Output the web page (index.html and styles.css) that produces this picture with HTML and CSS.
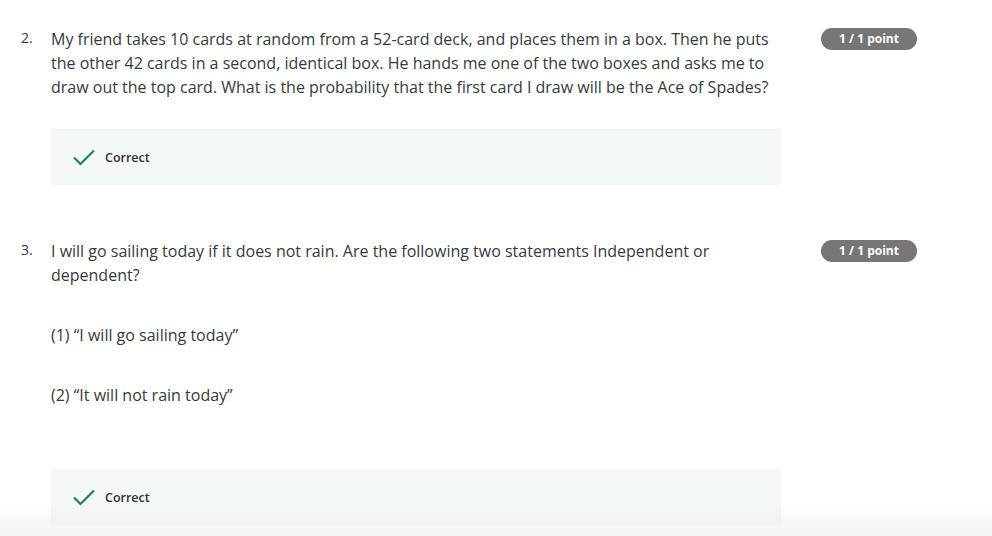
FILE: index.html
```html
<!DOCTYPE html>
<html lang="en">
<head>
<meta charset="utf-8">
<link rel="stylesheet" href="styles.css">
</head>
<body>
<div class="page">
  <div class="question q2">
    <div class="num">2.</div>
    <div class="content">
      <p class="prompt">My friend takes 10 cards at random from a 52-card deck, and places them in a box. Then he puts the other 42 cards in a second, identical box. He hands me one of the two boxes and asks me to draw out the top card. What is the probability that the first card I draw will be the Ace of Spades?</p>
      <div class="feedback">
        <svg class="check" width="24" height="24" viewBox="0 0 24 24"><path d="M2 12.5 L8.5 19 L22 5.5" fill="none" stroke="#1f8354" stroke-width="2.2"/></svg>
        <span>Correct</span>
      </div>
    </div>
    <div class="score"><span class="badge">1 / 1 point</span></div>
  </div>

  <div class="question q3">
    <div class="num">3.</div>
    <div class="content">
      <p class="prompt">I will go sailing today if it does not rain. Are the following two statements Independent or dependent?</p>
      <p class="stmt">(1) “I will go sailing today”</p>
      <p class="stmt">(2) “It will not rain today”</p>
      <div class="feedback last">
        <svg class="check" width="24" height="24" viewBox="0 0 24 24"><path d="M2 12.5 L8.5 19 L22 5.5" fill="none" stroke="#1f8354" stroke-width="2.2"/></svg>
        <span>Correct</span>
      </div>
    </div>
    <div class="score"><span class="badge">1 / 1 point</span></div>
  </div>
</div>
<div class="fade"></div>
</body>
</html>
```

FILE: styles.css
```css
html, body {
  margin: 0;
  padding: 0;
  background: #fff;
}
body {
  font-family: "Open Sans", "Noto Sans", sans-serif;
  color: #373a3c;
  overflow: hidden;
}
.page {
  padding-top: 27px;
}
.question {
  display: grid;
  grid-template-columns: 30px 730px 136px;
  padding-left: 21px;
}
.q3 {
  margin-top: 54px;
}
.num {
  font-size: 14px;
  line-height: 22px;
  color: #373a3c;
}
.prompt, .stmt {
  margin: 0;
  font-size: 16px;
  line-height: 24px;
}
.stmt {
  margin-top: 36px;
}
.feedback {
  margin-top: 30px;
  height: 56px;
  background: #f3f8f6;
  display: flex;
  align-items: center;
  padding-left: 21px;
  gap: 9px;
  font-size: 12.5px;
  font-weight: 600;
  color: #2f3133;
}
.feedback.last {
  margin-top: 62px;
}
.check {
  display: block;
  margin-top: -1px;
}
.score {
  padding-left: 40px;
  padding-top: 1px;
}
.badge {
  display: block;
  width: 96px;
  height: 22px;
  line-height: 22px;
  border-radius: 11px;
  background: #767676;
  color: #fff;
  font-size: 12px;
  font-weight: 700;
  text-align: center;
}
.fade {
  position: fixed;
  left: 0;
  right: 0;
  bottom: 0;
  height: 34px;
  background: linear-gradient(to bottom, rgba(240,240,240,0), rgba(238,238,238,0.75));
  pointer-events: none;
}
```
